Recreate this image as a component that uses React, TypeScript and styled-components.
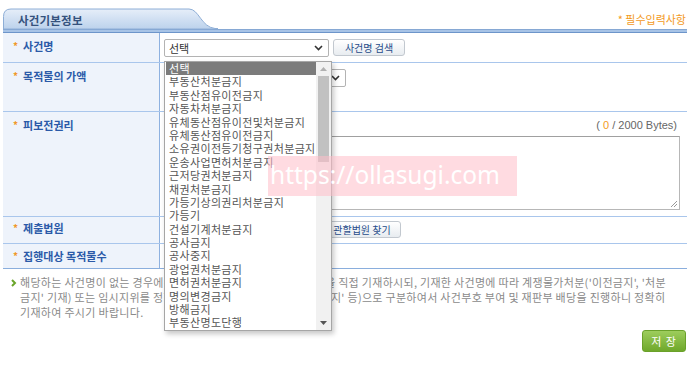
import React from 'react'
import styled, { createGlobalStyle } from 'styled-components'

const GlobalStyle = createGlobalStyle`
  html, body {
    margin: 0;
    padding: 0;
    background: #fff;
  }
  body {
    font-family: 'Noto Sans CJK KR', 'Noto Sans', sans-serif;
  }
`

const Page = styled.div`
  position: relative;
  width: 684px;
  padding: 8px 0 0 3px;
`

const Header = styled.div`
  display: flex;
  align-items: center;
  justify-content: space-between;
  height: 21px;
`

const Tab = styled.div`
  position: relative;
  width: 215px;
  height: 21px;
  svg {
    position: absolute;
    left: 0;
    top: 0;
  }
`

const TabTitle = styled.span`
  position: relative;
  display: block;
  padding: 5px 0 0 15px;
  font-size: 11.5px;
  font-weight: 700;
  line-height: 14px;
  letter-spacing: 0.2px;
  color: #35527d;
`

const Required = styled.span`
  font-size: 11px;
  color: #f39a1e;
  padding-right: 1px;
`

const Bar = styled.div`
  height: 2px;
  background: #a7c3e6;
  border-top: 1px solid #86a8d4;
  border-bottom: 1px solid #6d95ca;
`

const Row = styled.div<{ $h: number; $dark?: boolean }>`
  display: grid;
  grid-template-columns: 157px 1fr;
  height: ${(p) => p.$h}px;
  border-bottom: 1px solid ${(p) => (p.$dark ? '#8aaedd' : '#a9c6ec')};
`

const Label = styled.div<{ $pad?: number }>`
  display: flex;
  align-items: flex-start;
  gap: 5px;
  padding: ${(p) => p.$pad ?? 6}px 0 0 10px;
  background: #eef3fb;
  border-right: 1px solid #8eb1e0;
  font-size: 11px;
  font-weight: 700;
  line-height: 14px;
  color: #2b5aa8;
  white-space: nowrap;
`

const Star = styled.span`
  color: #f0982a;
  font-size: 10px;
`

const Cell = styled.div<{ $pad?: number }>`
  display: flex;
  align-items: flex-start;
  gap: 4px;
  padding: ${(p) => p.$pad ?? 6}px 7px 0 4px;
`

const Column = styled.div`
  display: flex;
  flex-direction: column;
  flex: 1;
`

const SelectWrap = styled.div`
  position: relative;
`

const FakeSelect = styled.div<{ $w: number }>`
  display: flex;
  align-items: center;
  justify-content: space-between;
  box-sizing: border-box;
  width: ${(p) => p.$w}px;
  height: 18px;
  padding: 0 5px 0 4px;
  border: 1px solid #b3b3b3;
  border-radius: 2px;
  background: #fff;
  font-size: 11px;
  color: #333;
`

const TextInput = styled.div<{ $w: number }>`
  box-sizing: border-box;
  width: ${(p) => p.$w}px;
  height: 18px;
  border: 1px solid #b3b3b3;
  background: #fff;
`

const Button = styled.button<{ $w: number }>`
  box-sizing: border-box;
  width: ${(p) => p.$w}px;
  height: 17px;
  padding: 0;
  border: 1px solid #c2c8cf;
  border-radius: 3px;
  background: linear-gradient(#ffffff, #e8ecf0);
  font-family: 'Noto Sans CJK KR', sans-serif;
  font-size: 10px;
  line-height: 15px;
  color: #274c8a;
`

const Bytes = styled.div`
  align-self: flex-end;
  font-family: 'Liberation Sans', sans-serif;
  font-size: 11px;
  line-height: 14px;
  color: #666;
  padding-right: 3px;
  em {
    font-style: normal;
    color: #f39a1e;
  }
`

const TextArea = styled.div`
  position: relative;
  box-sizing: border-box;
  height: 74px;
  margin-top: 4px;
  border: 1px solid #b7b7b7;
  border-top-color: #a0a0a0;
  background: #fff;
  svg {
    position: absolute;
    right: 1px;
    bottom: 1px;
  }
`

const Dropdown = styled.div`
  position: absolute;
  left: 0;
  top: 22px;
  z-index: 5;
  display: flex;
  box-sizing: border-box;
  width: 168px;
  height: 270px;
  border: 1px solid #a6a6a6;
  background: #fff;
  box-shadow: 2px 3px 5px rgba(0, 0, 0, 0.22);
`

const List = styled.ul`
  flex: 1;
  margin: 0;
  padding: 0 0 0 1px;
  list-style: none;
`

const Item = styled.li<{ $active?: boolean }>`
  height: 13.4px;
  padding-left: 3px;
  font-size: 11px;
  letter-spacing: 0.35px;
  line-height: 13.4px;
  white-space: nowrap;
  color: ${(p) => (p.$active ? '#fff' : '#555')};
  background: ${(p) => (p.$active ? '#7b7b7b' : 'transparent')};
`

const Scrollbar = styled.div`
  display: flex;
  flex-direction: column;
  align-items: center;
  width: 15px;
  background: #f1f1f1;
`

const Arrow = styled.div`
  height: 14px;
  display: flex;
  align-items: center;
`

const Thumb = styled.div`
  width: 11px;
  height: 86px;
  background: #c1c1c1;
`

const Track = styled.div`
  flex: 1;
`

const Note = styled.div`
  display: flex;
  gap: 3px;
  padding: 6px 0 0 8px;
  font-size: 11px;
  letter-spacing: 0.3px;
  line-height: 15px;
  color: #8a8a8a;
  white-space: nowrap;
  svg {
    flex: none;
    margin-top: 4px;
  }
`

const SaveRow = styled.div`
  display: flex;
  justify-content: flex-end;
  padding: 10px 1px 0 0;
`

const SaveButton = styled.button`
  width: 44px;
  height: 22px;
  padding: 0;
  border: 1px solid #6aa12a;
  border-radius: 3px;
  background: linear-gradient(#9dcd5c, #6fa82b);
  font-family: 'Noto Sans CJK KR', sans-serif;
  font-size: 11px;
  color: #fff;
  letter-spacing: 1px;
`

const Watermark = styled.div`
  position: absolute;
  left: 268px;
  top: 156px;
  z-index: 10;
  width: 249px;
  height: 40px;
  background: rgba(255, 190, 200, 0.55);
  font-family: 'Noto Sans', sans-serif;
  font-size: 24.5px;
  line-height: 38px;
  color: #fff;
  white-space: nowrap;
  overflow: hidden;
  padding-left: 2px;
  box-sizing: border-box;
`

const options = [
  '선택',
  '부동산처분금지',
  '부동산점유이전금지',
  '자동차처분금지',
  '유체동산점유이전및처분금지',
  '유체동산점유이전금지',
  '소유권이전등기청구권처분금지',
  '운송사업면허처분금지',
  '근저당권처분금지',
  '채권처분금지',
  '가등기상의권리처분금지',
  '가등기',
  '건설기계처분금지',
  '공사금지',
  '공사중지',
  '광업권처분금지',
  '면허권처분금지',
  '명의변경금지',
  '방해금지',
  '부동산명도단행',
]

const Chevron = () => (
  <svg width="9" height="6" viewBox="0 0 9 6">
    <path d="M1 1l3.5 3.5L8 1" fill="none" stroke="#333" strokeWidth="1.6" />
  </svg>
)

const Tri = ({ up }: { up?: boolean }) => (
  <svg width="7" height="4" viewBox="0 0 7 4">
    <path d={up ? 'M0 4h7L3.5 0z' : 'M0 0h7L3.5 4z'} fill={up ? '#b0b0b0' : '#555'} />
  </svg>
)

export default function App() {
  return (
    <>
      <GlobalStyle />
      <Page>
        <Header>
          <Tab>
            <svg width="215" height="21" viewBox="0 0 215 21">
              <defs>
                <linearGradient id="tabfill" x1="0" y1="0" x2="0" y2="1">
                  <stop offset="0" stopColor="#e6eef9" />
                  <stop offset="1" stopColor="#bcd2ec" />
                </linearGradient>
              </defs>
              <path
                d="M0.5 21V8.5Q0.5 1 8 1H186C196 1 198 19 212 20.5H215V21Z"
                fill="url(#tabfill)"
                stroke="#8eaed6"
              />
            </svg>
            <TabTitle>사건기본정보</TabTitle>
          </Tab>
          <Required>* 필수입력사항</Required>
        </Header>
        <Bar />

        <Row $h={29}>
          <Label>
            <Star>*</Star>사건명
          </Label>
          <Cell>
            <SelectWrap>
              <FakeSelect $w={165}>
                선택
                <Chevron />
              </FakeSelect>
              <Dropdown>
                <List>
                  {options.map((o, i) => (
                    <Item key={o} $active={i === 0}>
                      {o}
                    </Item>
                  ))}
                </List>
                <Scrollbar>
                  <Arrow>
                    <Tri up />
                  </Arrow>
                  <Thumb />
                  <Track />
                  <Arrow>
                    <Tri />
                  </Arrow>
                </Scrollbar>
              </Dropdown>
            </SelectWrap>
            <Button $w={72}>사건명 검색</Button>
          </Cell>
        </Row>

        <Row $h={48}>
          <Label>
            <Star>*</Star>목적물의 가액
          </Label>
          <Cell>
            <FakeSelect $w={182}>
              선택
              <Chevron />
            </FakeSelect>
          </Cell>
        </Row>

        <Row $h={104}>
          <Label>
            <Star>*</Star>피보전권리
          </Label>
          <Cell>
            <Column>
              <Bytes>
                ( <em>0</em> / 2000 Bytes)
              </Bytes>
              <TextArea>
                <svg width="9" height="9" viewBox="0 0 9 9">
                  <path d="M8 2L2 8M8 5L5 8" stroke="#999" strokeWidth="1" />
                </svg>
              </TextArea>
            </Column>
          </Cell>
        </Row>

        <Row $h={26}>
          <Label $pad={4}>
            <Star>*</Star>제출법원
          </Label>
          <Cell $pad={4}>
            <TextInput $w={155} />
            <Button $w={78}>관할법원 찾기</Button>
          </Cell>
        </Row>

        <Row $h={24} $dark>
          <Label $pad={5}>
            <Star>*</Star>집행대상 목적물수
          </Label>
          <Cell />
        </Row>

        <Note>
          <svg width="6" height="8" viewBox="0 0 6 8">
            <path d="M1 1l3 3-3 3" fill="none" stroke="#6aa52a" strokeWidth="2" />
          </svg>
          <div>
            해당하는 사건명이 없는 경우에는 '기타(직접입력)' 선택 후 사건명을 직접 기재하시되, 기재한 사건명에 따라 계쟁물가처분('이전금지', '처분
            <br />
            금지' 기재) 또는 임시지위를 정하는 가처분('직무집행정지', '공사금지' 등)으로 구분하여서 사건부호 부여 및 재판부 배당을 진행하니 정확히
            <br />
            기재하여 주시기 바랍니다.
          </div>
        </Note>

        <SaveRow>
          <SaveButton>저 장</SaveButton>
        </SaveRow>

        <Watermark>https://ollasugi.com</Watermark>
      </Page>
    </>
  )
}
